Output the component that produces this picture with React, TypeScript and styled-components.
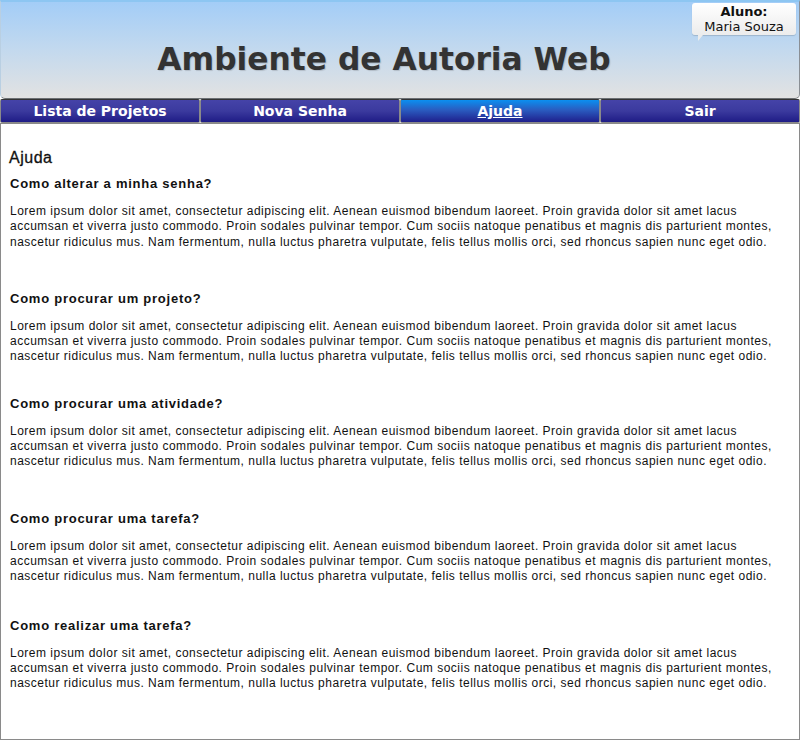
import React from "react";
import styled, { createGlobalStyle } from "styled-components";

const Global = createGlobalStyle`
  html, body { margin: 0; padding: 0; background: #ffffff; }
  body { font-family: "Liberation Sans", Arial, sans-serif; }
  * { box-sizing: border-box; }
`;

const Page = styled.div`
  width: 800px;
  height: 740px;
  display: flex;
  flex-direction: column;
`;

const Header = styled.header`
  position: relative;
  height: 99px;
  border-top: 2px solid #8dc6f2;
  border-left: 1px solid #b9cfe2;
  border-right: 1px solid #8a8f95;
  border-bottom: 1px solid #6b6f73;
  border-radius: 0 0 5px 5px;
  background: linear-gradient(to bottom, #a3cdf7 0%, #c3d9ee 50%, #e2e2e2 100%);
  display: flex;
  align-items: center;
  justify-content: center;
`;

const Title = styled.h1`
  margin: 0;
  padding-top: 18px;
  padding-right: 32px;
  font-family: "DejaVu Sans", Verdana, sans-serif;
  font-weight: bold;
  font-size: 31.3px;
  color: #333333;
  text-shadow: 1px 1px 1px rgba(0, 0, 0, 0.15);
`;

const UserBox = styled.div`
  position: absolute;
  top: 1px;
  right: 3px;
  width: 104px;
  height: 32px;
  border-radius: 3px;
  background: linear-gradient(to bottom, #ffffff 0%, #ececec 100%);
  box-shadow: 0 1px 1px rgba(0, 0, 0, 0.15);
  font-family: "DejaVu Sans", Verdana, sans-serif;
  font-size: 13px;
  color: #111;
  text-align: center;
  line-height: 15px;
  padding-top: 1px;
  &::after {
    content: "";
    position: absolute;
    left: 6px;
    bottom: -6px;
    border-left: 5px solid #ececec;
    border-bottom: 6px solid transparent;
  }
`;

const UserLabel = styled.div`
  font-weight: bold;
`;

const Nav = styled.nav`
  display: grid;
  grid-template-columns: repeat(4, 200px);
  height: 24px;
`;

const Tab = styled.a<{ $active?: boolean }>`
  display: flex;
  align-items: center;
  justify-content: center;
  border: 1px solid #8a8a8a;
  border-top-color: #333;
  border-radius: 2px;
  background: ${(p) =>
    p.$active
      ? "linear-gradient(to bottom, #0b8ff0 0%, #2a5cc0 45%, #1f1f8c 100%)"
      : "linear-gradient(to bottom, #4543a8 0%, #3b3a9e 50%, #1f1c86 100%)"};
  color: #ffffff;
  font-family: "DejaVu Sans", Verdana, sans-serif;
  font-weight: bold;
  font-size: 14px;
  text-decoration: ${(p) => (p.$active ? "underline" : "none")};
`;

const Content = styled.main`
  flex: 1;
  border: 1px solid #8a8a8a;
  padding: 24px 9px 0 8px;
  color: #111;
`;

const PageTitle = styled.h2`
  margin: 0 0 8px 0;
  font-size: 16px;
  font-weight: normal;
  line-height: 20px;
  letter-spacing: 0.5px;
  color: #111;
  -webkit-text-stroke: 0.3px #111;
`;

const Section = styled.section<{ $gap: number }>`
  margin-bottom: ${(p) => p.$gap}px;
  padding-left: 1px;
`;

const Question = styled.h3`
  margin: 0 0 12px 0;
  font-size: 13px;
  font-weight: bold;
  line-height: 16px;
  letter-spacing: 0.75px;
`;

const Answer = styled.p`
  margin: 0;
  font-size: 12px;
  line-height: 15.3px;
  letter-spacing: 0.5px;
  color: #111;
`;

const lorem =
  "Lorem ipsum dolor sit amet, consectetur adipiscing elit. Aenean euismod bibendum laoreet. Proin gravida dolor sit amet lacus accumsan et viverra justo commodo. Proin sodales pulvinar tempor. Cum sociis natoque penatibus et magnis dis parturient montes, nascetur ridiculus mus. Nam fermentum, nulla luctus pharetra vulputate, felis tellus mollis orci, sed rhoncus sapien nunc eget odio.";

const faqs = [
  { q: "Como alterar a minha senha?", gap: 41 },
  { q: "Como procurar um projeto?", gap: 31 },
  { q: "Como procurar uma atividade?", gap: 41 },
  { q: "Como procurar uma tarefa?", gap: 33 },
  { q: "Como realizar uma tarefa?", gap: 0 },
];

export default function App() {
  return (
    <Page>
      <Global />
      <Header>
        <Title>Ambiente de Autoria Web</Title>
        <UserBox>
          <UserLabel>Aluno:</UserLabel>
          <div>Maria Souza</div>
        </UserBox>
      </Header>
      <Nav>
        <Tab>Lista de Projetos</Tab>
        <Tab>Nova Senha</Tab>
        <Tab $active>Ajuda</Tab>
        <Tab>Sair</Tab>
      </Nav>
      <Content>
        <PageTitle>Ajuda</PageTitle>
        {faqs.map((f) => (
          <Section key={f.q} $gap={f.gap}>
            <Question>{f.q}</Question>
            <Answer>{lorem}</Answer>
          </Section>
        ))}
      </Content>
    </Page>
  );
}
